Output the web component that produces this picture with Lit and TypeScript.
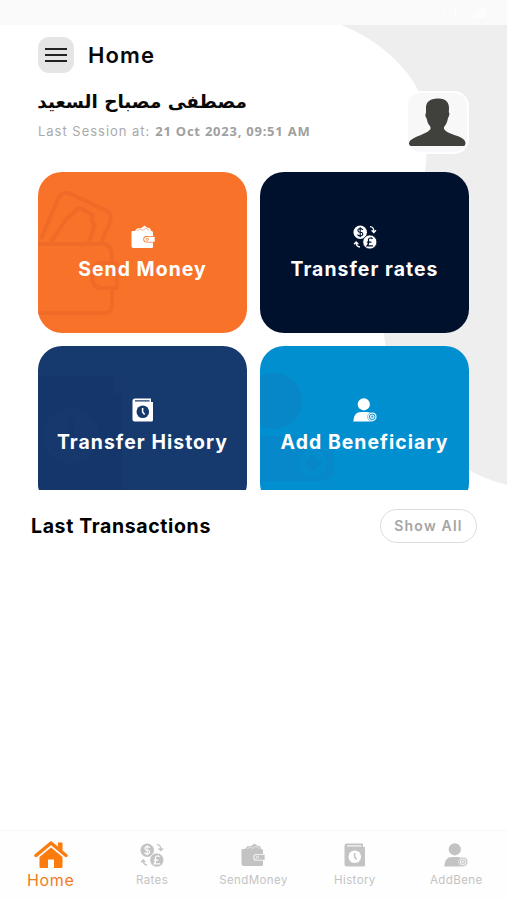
import { LitElement, html, svg, css } from "lit";
import { customElement } from "lit/decorators.js";

const icons = {
  wallet: svg`
    <path d="M3 7 6.5 3.2 10 3.2 13.5 .6 16 2.6 19 3.2 20.5 7Z" fill="currentColor"/>
    <path d="M6 5.6 9.5 4.4 12 5.3 15 3.2 18.5 5.6" fill="none" stroke="var(--cut)" stroke-width=".5"/>
    <path d="M.5 7Q.5 6 2 6H20.5Q22 6 22 7.5V11H15.5Q12.3 11 12.3 14.3T15.5 17.6H22V22Q22 23 20.5 23H2.5Q.5 23 .5 21Z" fill="currentColor"/>
    <path d="M16 11.8H23.7V16.8H16Q13.2 16.8 13.2 14.3T16 11.8Z" fill="currentColor"/>
    <circle cx="16.4" cy="14.3" r="1.1" fill="none" stroke="var(--cut)" stroke-width=".7"/>`,
  rates: svg`
    <circle cx="7.2" cy="7.2" r="6.7" fill="currentColor"/>
    <path d="M9.8 4.8Q8.8 3.5 7.2 3.6 4.8 3.7 4.9 5.5T7.3 7.2 9.7 9 7.3 10.9Q5.4 11 4.5 9.6M7.2 2.2V12.2" fill="none" stroke="var(--cut)" stroke-width="1.1"/>
    <circle cx="16.8" cy="17" r="7" fill="currentColor" stroke="var(--cut)" stroke-width=".7"/>
    <path d="M19.5 14Q18.8 12.8 17.2 13 15.2 13.2 15.5 15.5 16.2 19 14.2 20.8H20M13.8 17.2H18.4" fill="none" stroke="var(--cut)" stroke-width="1.2"/>
    <path d="M17 1.7Q20.8 1.8 20.8 6.5M18.6 5.2 20.8 7.5 23 5.2M7 22Q3.2 21.9 3.2 17.5M1 19.2 3.2 16.9 5.4 19.2" fill="none" stroke="currentColor" stroke-width="1.3"/>`,
  history: svg`
    <path d="M4 .5H20V4H22V22Q22 23.5 20.5 23.5H3.5Q1.5 23.5 1.5 21.5V3Q1.5.5 4 .5Z" fill="currentColor"/>
    <path d="M4 2.9H18.6" fill="none" stroke="var(--cut)" stroke-width="1.1"/>
    <circle cx="11.8" cy="13.8" r="6.3" fill="var(--cut)"/>
    <path d="M11.6 10.1V13.9L13.6 16.5" fill="none" stroke="currentColor" stroke-width="1.5"/>`,
  person: svg`
    <circle cx="10.8" cy="6.3" r="6.1" fill="currentColor"/>
    <path d="M.3 23.5Q.6 14 8 14H14Q17.5 14 18.6 16L19 23.5Z" fill="currentColor"/>
    <circle cx="19.2" cy="18.8" r="4.6" fill="currentColor" stroke="var(--cut)" stroke-width=".5"/>
    <circle cx="19.2" cy="18.8" r="2.8" fill="none" stroke="var(--cut)" stroke-width="1"/>
    <path d="M19.2 17.2V20.4M17.6 18.8H20.8" stroke="var(--cut)" stroke-width=".7"/>`,
};

const marks = {
  wallet: svg`<g fill="none" stroke="#f06b27" stroke-width="4" stroke-linejoin="round">
    <path d="M3 67 20 27Q24 18 33 22L67 38Q75 42 72 50L62 73"/>
    <path d="M13 70 27 49Q31 43 35 42 40 33 47 39L55 43Q52 50 57 53L50 72"/>
    <path d="M0 72H66Q74 73 74 84V91H62Q54 93 54 104T62 116H79V91H74M74 116V133Q74 141 66 141H0"/></g>`,
  none: svg``,
  history: svg`<path d="M0 30H76V47H84V144H0Z" fill="#15366a" opacity=".8"/><circle cx="33" cy="90" r="28" fill="#16386d"/><path d="M33 72V94L45 103" stroke="#15366a" stroke-width="7" fill="none"/>`,
  person: svg`<circle cx="14" cy="55" r="28" fill="#0787c8"/><path d="M0 90H35Q45 91 48 104H74V125Q72 134 60 135H0Z" fill="#0688ca"/><circle cx="53" cy="117" r="14" fill="#058ccc"/><path d="M53 109V125M45 117H61" stroke="#0787c8" stroke-width="6"/>`,
};

const cards = [
  { cls: "orange", icon: icons.wallet, mark: marks.wallet, label: "Send Money" },
  { cls: "navy", icon: icons.rates, mark: marks.none, label: "Transfer rates" },
  { cls: "blue", icon: icons.history, mark: marks.history, label: "Transfer History" },
  { cls: "sky", icon: icons.person, mark: marks.person, label: "Add Beneficiary" },
];

const tabs = [
  { icon: icons.rates, label: "Rates" },
  { icon: icons.wallet, label: "SendMoney" },
  { icon: icons.history, label: "History" },
  { icon: icons.person, label: "AddBene" },
];

@customElement("app-root")
export class AppRoot extends LitElement {
  static styles = css`
    :host { display: block; font-family: Inter, "Liberation Sans", sans-serif; color: #080808; }
    * { box-sizing: border-box; }
    .screen { position: relative; display: flex; flex-direction: column; width: 507px; height: 900px; background: #fff; overflow: hidden; white-space: nowrap; }
    .backdrop { position: absolute; inset: 0; z-index: 0; width: 507px; height: 500px; }
    .status { height: 25px; flex: none; background: #fafafa; position: relative; }
    .signals { position: absolute; right: 20px; top: 5px; width: 70px; height: 15px; }
    .content { position: relative; display: flex; flex-direction: column; flex: 1; }
    .top { display: flex; align-items: center; gap: 14px; padding: 12px 38px 0; height: 48px; }
    .menu { width: 36px; height: 36px; border: 0; border-radius: 11px; background: #e5e5e5; padding: 0; display: grid; place-items: center; }
    .title { font-size: 22px; font-weight: 600; letter-spacing: 1.1px; margin: 0; line-height: 36px; }
    .profile { display: flex; justify-content: space-between; height: 99px; padding: 18px 38px 0 38px; }
    .name { font: 700 18.4px/22px "DejaVu Sans", sans-serif; width: 209px; text-align: left; }
    .session { display: flex; font-size: 13px; line-height: 18px; margin-top: 9px; color: #aaa; letter-spacing: .98px; }
    .date { font-family: "Noto Sans", sans-serif; font-weight: 700; color: #a0a0a0; letter-spacing: .76px; margin-left: 5px; }
    .avatar { width: 63px; height: 63px; border-radius: 15px; border: 2px solid #fff; background: #f8f8f8; display: block; }
    .cards { display: grid; grid-template-columns: 209px 209px; grid-auto-rows: 161px; gap: 13px; height: 318px; margin: 0 38px; overflow: hidden; }
    .card { position: relative; border-radius: 24px; overflow: hidden; color: #fff; display: flex; flex-direction: column; align-items: center; padding-top: 52px; }
    .mark { position: absolute; left: 0; top: 0; width: 209px; height: 161px; }
    .glyph { position: relative; width: 24px; height: 24px; }
    .label { position: relative; font-size: 19.4px; line-height: 24px; font-weight: 700; letter-spacing: 1.05px; margin-top: 8px; }
    .orange, .navy { padding-top: 53px; }
    .orange { background: #f9722a; --cut: #f9722a; }
    .navy { background: #00112e; --cut: #00112e; }
    .blue { background: #163a6e; --cut: #163a6e; }
    .sky { background: #028fcf; --cut: #028fcf; }
    .section { display: flex; justify-content: space-between; align-items: center; padding: 0 30px 0 31px; margin-top: 19px; height: 34px; }
    .heading { font-size: 19.5px; font-weight: 700; margin: 0; letter-spacing: .63px; color: #000; }
    .more { width: 97px; height: 34px; border: 1.5px solid #dcdcdc; border-radius: 17px; background: #fff; color: #a5a5a5; font: 600 14px Inter, sans-serif; letter-spacing: 1.2px; padding: 0 0 1px; }
    .tabs { position: relative; height: 70px; flex: none; border-top: 1px solid #f6f6f6; background: #fefefe; display: grid; grid-template-columns: repeat(5, 1fr); color: #c3c3c3; --cut: #fefefe; }
    .tab { display: flex; flex-direction: column; align-items: center; padding-top: 12px; }
    .tab-label { font-size: 11.5px; line-height: 15px; margin-top: 6px; letter-spacing: .4px; }
    .active { padding-top: 10px; color: #f07c20; }
    .active-label { font-size: 16px; line-height: 20px; margin-top: 1px; letter-spacing: .6px; }
  `;

  render() {
    return html`
      <div class="screen">
        <svg class="backdrop" viewBox="0 0 507 500"><path d="M341 25C380 40 408 68 419 92C428 118 428 148 425 172C418 230 380 265 384 335C392 400 430 465 507 485V25Z" fill="#eee"/></svg>
        <div class="status">
          <svg class="signals" viewBox="0 0 70 15"><path d="M28 12V7M33 12V5M38 12V3M55 12 67 3V12Z" stroke="#fdfdfd" stroke-width="2" fill="#fdfdfd"/></svg>
        </div>
        <main class="content">
          <header class="top">
            <button class="menu" aria-label="Menu"><svg width="22" height="16" viewBox="0 0 22 16"><path d="M0 2H22M0 8H22M0 14H22" stroke="#222" stroke-width="2.2"/></svg></button>
            <h1 class="title">Home</h1>
          </header>
          <section class="profile">
            <div>
              <div class="name" dir="rtl">مصطفى مصباح السعيد</div>
              <div class="session"><span>Last Session at:</span><span class="date">21 Oct 2023, 09:51 AM</span></div>
            </div>
            <svg class="avatar" viewBox="0 0 59 59"><path d="M29.5 5.5C37 5 41.5 9 41 16L40.8 19Q42 20 41 23L40 25Q39 31 36 34V36Q38 39 45 41.5C53 44 57 46 57.5 50Q57.5 53 55.5 53H3Q.5 53 1 50C2 46 8 44 14 41.5Q21 38.5 22.5 36V34Q19 30 18.5 25 16.5 23 18 19.5V16C17.5 9 22 5.5 29.5 5.5Z" fill="#40403d"/></svg>
          </section>
          <section class="cards">
            ${cards.map((c) => html`<div class="card ${c.cls}">
              <svg class="mark" viewBox="0 0 209 161">${c.mark}</svg>
              <svg class="glyph" viewBox="0 0 24 24">${c.icon}</svg>
              <span class="label">${c.label}</span>
            </div>`)}
          </section>
          <section class="section"><h2 class="heading">Last Transactions</h2><button class="more">Show All</button></section>
        </main>
        <nav class="tabs">
          <div class="tab active">
            <svg width="34" height="28" viewBox="0 0 34 28"><path d="M2 14.5 17 2 32 14.5" fill="none" stroke="#fb7b0c" stroke-width="3.4" stroke-linecap="round" stroke-linejoin="round"/><path d="M24 1.5H28.5V10L24 6Z" fill="#fb7b0c"/><path d="M5.5 16 17 6.5 28.5 16V25.5Q28.5 27 27 27H20V18.5H14V27H7Q5.5 27 5.5 25.5Z" fill="#fb7b0c"/></svg>
            <span class="active-label">Home</span>
          </div>
          ${tabs.map((t) => html`<div class="tab"><svg class="glyph" viewBox="0 0 24 24">${t.icon}</svg><span class="tab-label">${t.label}</span></div>`)}
        </nav>
      </div>`;
  }
}
